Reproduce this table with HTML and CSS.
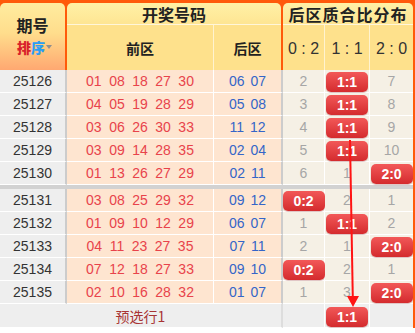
FILE: index.html
```html
<!DOCTYPE html>
<html lang="zh">
<head>
<meta charset="utf-8">
<link rel="stylesheet" href="styles.css">
</head>
<body>
<div class="board">
  <div class="head">
    <div class="h-no"><span class="t-no">期号</span><span class="sort"><b class="s1">排</b><b class="s2">序</b><i class="tri"></i></span></div>
    <div class="h-kj">开奖号码</div>
    <div class="h-dist">后区质合比分布</div>
    <div class="h-front">前区</div>
    <div class="h-back">后区</div>
    <div class="h-d h-d1">0 : 2</div>
    <div class="h-d h-d2">1 : 1</div>
    <div class="h-d h-d3">2 : 0</div>
  </div>
  <div class="body">
    <div class="row">
      <div class="c-no">25126</div>
      <div class="c-front"><span>01</span><span>08</span><span>18</span><span>27</span><span>30</span></div>
      <div class="c-back"><span>06</span><span>07</span></div>
      <div class="c-d">2</div><div class="c-d"><span class="badge">1:1</span></div><div class="c-d">7</div>
    </div>
    <div class="row">
      <div class="c-no">25127</div>
      <div class="c-front"><span>04</span><span>05</span><span>19</span><span>28</span><span>29</span></div>
      <div class="c-back"><span>05</span><span>08</span></div>
      <div class="c-d">3</div><div class="c-d"><span class="badge">1:1</span></div><div class="c-d">8</div>
    </div>
    <div class="row">
      <div class="c-no">25128</div>
      <div class="c-front"><span>03</span><span>06</span><span>26</span><span>30</span><span>33</span></div>
      <div class="c-back"><span>11</span><span>12</span></div>
      <div class="c-d">4</div><div class="c-d"><span class="badge">1:1</span></div><div class="c-d">9</div>
    </div>
    <div class="row">
      <div class="c-no">25129</div>
      <div class="c-front"><span>03</span><span>09</span><span>14</span><span>28</span><span>35</span></div>
      <div class="c-back"><span>02</span><span>04</span></div>
      <div class="c-d">5</div><div class="c-d"><span class="badge">1:1</span></div><div class="c-d">10</div>
    </div>
    <div class="row">
      <div class="c-no">25130</div>
      <div class="c-front"><span>01</span><span>13</span><span>26</span><span>27</span><span>29</span></div>
      <div class="c-back"><span>02</span><span>11</span></div>
      <div class="c-d">6</div><div class="c-d">1</div><div class="c-d"><span class="badge">2:0</span></div>
    </div>
    <div class="sep"></div>
    <div class="row">
      <div class="c-no">25131</div>
      <div class="c-front"><span>03</span><span>08</span><span>25</span><span>29</span><span>32</span></div>
      <div class="c-back"><span>09</span><span>12</span></div>
      <div class="c-d"><span class="badge">0:2</span></div><div class="c-d">2</div><div class="c-d">1</div>
    </div>
    <div class="row">
      <div class="c-no">25132</div>
      <div class="c-front"><span>01</span><span>09</span><span>10</span><span>12</span><span>29</span></div>
      <div class="c-back"><span>06</span><span>07</span></div>
      <div class="c-d">1</div><div class="c-d"><span class="badge">1:1</span></div><div class="c-d">2</div>
    </div>
    <div class="row">
      <div class="c-no">25133</div>
      <div class="c-front"><span>04</span><span>11</span><span>23</span><span>27</span><span>35</span></div>
      <div class="c-back"><span>07</span><span>11</span></div>
      <div class="c-d">2</div><div class="c-d">1</div><div class="c-d"><span class="badge">2:0</span></div>
    </div>
    <div class="row">
      <div class="c-no">25134</div>
      <div class="c-front"><span>07</span><span>12</span><span>18</span><span>27</span><span>33</span></div>
      <div class="c-back"><span>09</span><span>10</span></div>
      <div class="c-d"><span class="badge">0:2</span></div><div class="c-d">2</div><div class="c-d">1</div>
    </div>
    <div class="row">
      <div class="c-no">25135</div>
      <div class="c-front"><span>02</span><span>10</span><span>16</span><span>28</span><span>32</span></div>
      <div class="c-back"><span>01</span><span>07</span></div>
      <div class="c-d">1</div><div class="c-d">3</div><div class="c-d"><span class="badge">2:0</span></div>
    </div>
    <div class="row row-pre">
      <div class="c-pre">预选行1</div>
      <div class="c-d"></div><div class="c-d"><span class="badge">1:1</span></div><div class="c-d"></div>
    </div>
  </div>
  <svg class="arrow" width="415" height="333" viewBox="0 0 415 333">
    <line x1="350" y1="140" x2="352.8" y2="298" stroke="#ff1414" stroke-width="2"/>
    <polygon points="347,296 359,296 353,307" fill="#ff1414"/>
  </svg>
</div>
</body>
</html>
```
FILE: styles.css
```css
html, body {
  margin: 0;
  padding: 0;
  background: #ffffff;
}
.board {
  position: relative;
  width: 415px;
  font-family: "Liberation Sans", "Noto Sans CJK SC", sans-serif;
  font-size: 14px;
}
.head {
  display: grid;
  grid-template-columns: 67px 147px 69px 42px 45px 45px;
  grid-template-rows: 22px 45px;
  background: #ff5a0a;
  padding-top: 3px;
  color: #222;
  font-family: "Noto Sans CJK SC", sans-serif;
  font-weight: bold;
}
.h-no {
  grid-row: 1 / 3;
  grid-column: 1;
  margin-right: 2px;
  border-radius: 5px 5px 0 0;
  background: linear-gradient(#ffec9f, #ffdd8c 45%, #ffa871);
  display: flex;
  flex-direction: column;
  align-items: center;
  padding-top: 12px;
  gap: 3px;
}
.t-no {
  font-size: 16px;
  line-height: 20px;
}
.sort {
  display: flex;
  align-items: center;
  font-size: 14px;
  line-height: 18px;
  margin-left: 4px;
}
.s1 { color: #d8222a; }
.s2 { color: #2a9df4; }
.tri {
  width: 0;
  height: 0;
  border-left: 3.5px solid transparent;
  border-right: 3.5px solid transparent;
  border-top: 4px solid #8f8f8f;
  margin-left: 1px;
}
.h-kj, .h-dist {
  grid-row: 1;
  margin-right: 2px;
  border-radius: 5px 5px 0 0;
  background: linear-gradient(#fff1a6, #fee593);
  border-bottom: 1px solid #fff6da;
  display: flex;
  align-items: center;
  justify-content: center;
  font-size: 16px;
}
.h-kj { grid-column: 2 / 4; }
.h-dist { grid-column: 4 / 7; letter-spacing: 1px; }
.h-front, .h-back, .h-d {
  grid-row: 2;
  background: #fee18c;
  display: flex;
  align-items: center;
  justify-content: center;
}
.h-front {
  grid-column: 2;
  border-right: 1px solid #fff3cf;
}
.h-back {
  grid-column: 3;
  margin-right: 2px;
}
.h-d {
  font-family: "Liberation Sans", sans-serif;
  font-weight: normal;
  font-size: 16px;
  color: #333;
  border-right: 1px solid #fff3cf;
  padding-top: 2px;
}
.h-d1 { grid-column: 4; }
.h-d2 { grid-column: 5; }
.h-d3 { grid-column: 6; border-right: 0; margin-right: 2px; }

.body {
  border-right: 2px solid #ff5a0a;
  width: 415px;
  box-sizing: border-box;
}
.row {
  display: grid;
  grid-template-columns: 67px 147px 69px 42px 45px 43px;
  height: 23px;
}
.row > div {
  border-bottom: 1px solid #ffffff;
  display: flex;
  align-items: center;
  justify-content: center;
  box-sizing: border-box;
}
.c-no {
  background: #eeeeee;
  color: #333;
  border-right: 2px solid #cccccc;
}
.c-front {
  background: #fee5d0;
  color: #e8434b;
  gap: 7.5px;
  border-right: 1px solid #ffffff;
}
.c-back {
  background: #fee5d0;
  color: #3565c8;
  gap: 6px;
  border-right: 2px solid #cccccc;
}
.c-d {
  background: #f5f0e5;
  color: #a6a6a6;
  border-right: 1px solid #ffffff;
}
.row > .c-d:last-child {
  border-right: 0;
}
.sep {
  height: 4px;
  background: #d2d2d2;
}
.row-pre {
  grid-template-columns: 283px 42px 45px 43px;
  height: 24px;
}
.c-pre {
  background: #eeeeee;
  color: #a83434;
  font-family: "Noto Sans CJK SC", sans-serif;
  font-size: 14px;
  border-right: 2px solid #dddddd;
}
.row-pre .c-d {
  background: #eeeeee;
}
.badge {
  flex: none;
  width: 42px;
  height: 20px;
  border-radius: 5px;
  background: linear-gradient(#f25858, #d42b2e);
  box-shadow: 0 1px 1px rgba(120, 0, 0, 0.25);
  color: #ffffff;
  font-weight: bold;
  font-size: 14px;
  display: flex;
  align-items: center;
  justify-content: center;
  margin-top: 2px;
}
.arrow {
  position: absolute;
  left: 0;
  top: 0;
  pointer-events: none;
}
```
